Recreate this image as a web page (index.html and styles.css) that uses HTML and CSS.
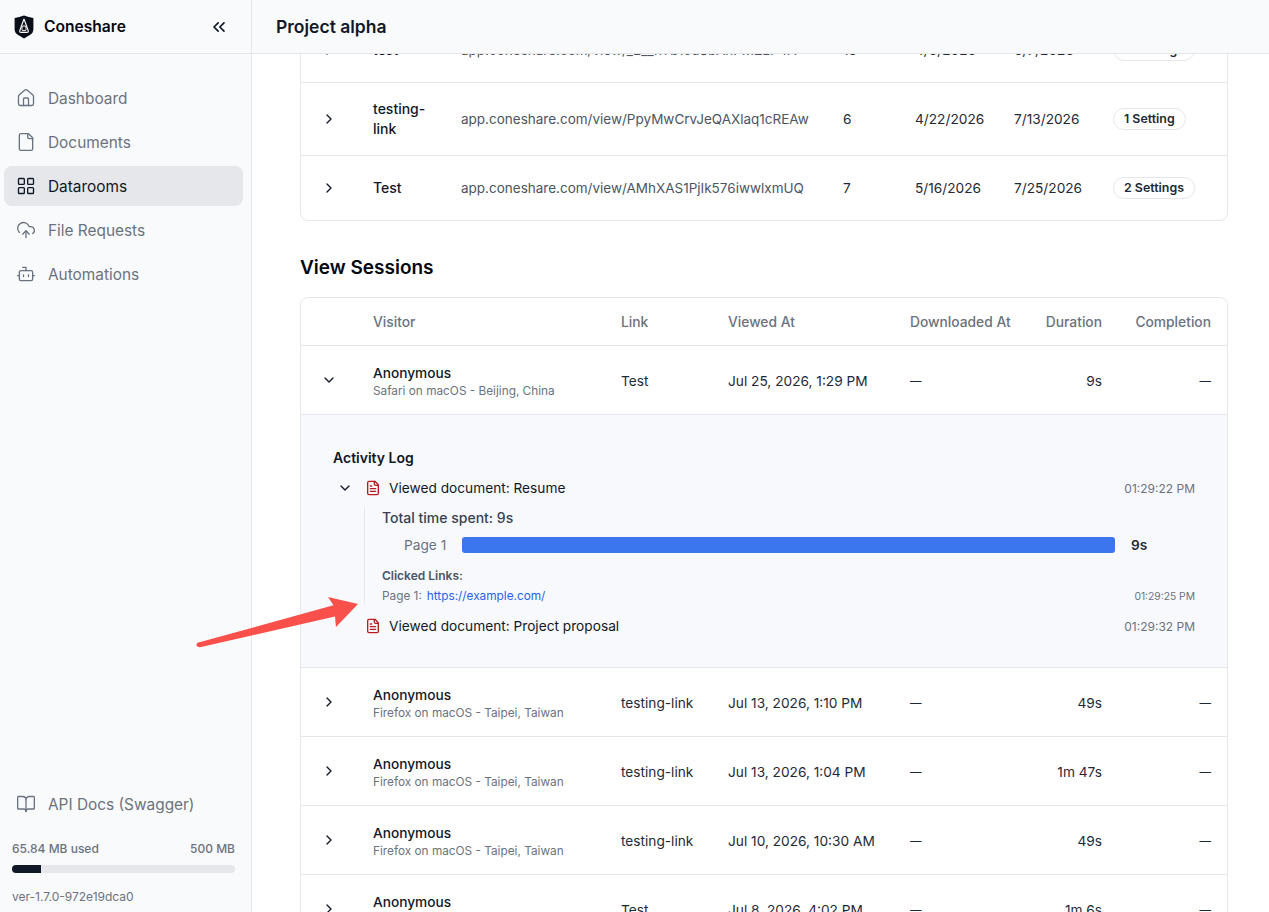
FILE: index.html
```html
<!DOCTYPE html>
<html>
<head>
  <title>Project alpha - Coneshare</title>
  <link rel="stylesheet" href="styles.css">
</head>
<body>
  <div class="app">
    <aside class="sidebar">
      <div class="brand">
        <svg class="logo" viewBox="0 0 20 24" width="20" height="24">
          <path d="M10 .4 Q15 2.2 19.4 3 V14 Q19.4 18.5 15 20.5 L10 23.6 L5 20.5 Q.6 18.5 .6 14 V3 Q5 2.2 10 .4 Z" fill="#0b0f19"/>
          <path d="M10 4 L14.2 15.5 Q14.6 17.4 13 17.4 H7 Q5.4 17.4 5.8 15.5 Z" fill="none" stroke="#fff" stroke-width="1.1" stroke-linejoin="round"/>
          <rect x="8" y="11" width="4" height="4.6" rx="1" fill="none" stroke="#fff" stroke-width="1"/>
        </svg>
        <span class="brand-name">Coneshare</span>
        <svg class="icon collapse" viewBox="0 0 24 24"><path d="m11 17-5-5 5-5"/><path d="m18 17-5-5 5-5"/></svg>
      </div>
      <nav class="nav">
        <a class="nav-item"><svg class="icon" viewBox="0 0 24 24"><path d="M15 21v-8a1 1 0 0 0-1-1h-4a1 1 0 0 0-1 1v8"/><path d="M3 10a2 2 0 0 1 .709-1.528l7-5.999a2 2 0 0 1 2.582 0l7 5.999A2 2 0 0 1 21 10v9a2 2 0 0 1-2 2H5a2 2 0 0 1-2-2z"/></svg>Dashboard</a>
        <a class="nav-item"><svg class="icon" viewBox="0 0 24 24"><path d="M15 2H6a2 2 0 0 0-2 2v16a2 2 0 0 0 2 2h12a2 2 0 0 0 2-2V7Z"/><path d="M14 2v4a2 2 0 0 0 2 2h4"/></svg>Documents</a>
        <a class="nav-item active"><svg class="icon" viewBox="0 0 24 24"><rect width="7" height="7" x="3" y="3" rx="1"/><rect width="7" height="7" x="14" y="3" rx="1"/><rect width="7" height="7" x="14" y="14" rx="1"/><rect width="7" height="7" x="3" y="14" rx="1"/></svg>Datarooms</a>
        <a class="nav-item"><svg class="icon" viewBox="0 0 24 24"><path d="M12 13v8"/><path d="M4 14.899A7 7 0 1 1 15.71 8h1.79a4.5 4.5 0 0 1 2.5 8.242"/><path d="m8 17 4-4 4 4"/></svg>File Requests</a>
        <a class="nav-item"><svg class="icon" viewBox="0 0 24 24"><path d="M12 8V4H8"/><rect width="16" height="12" x="4" y="8" rx="2"/><path d="M2 14h2"/><path d="M20 14h2"/><path d="M15 13v2"/><path d="M9 13v2"/></svg>Automations</a>
      </nav>
      <div class="side-foot">
        <a class="nav-item"><svg class="icon" viewBox="0 0 24 24"><path d="M12 7v14"/><path d="M3 18a1 1 0 0 1-1-1V4a1 1 0 0 1 1-1h5a4 4 0 0 1 4 4 4 4 0 0 1 4-4h5a1 1 0 0 1 1 1v13a1 1 0 0 1-1 1h-6a3 3 0 0 0-3 3 3 3 0 0 0-3-3z"/></svg>API Docs (Swagger)</a>
        <div class="usage">
          <div class="usage-row"><span>65.84 MB used</span><span>500 MB</span></div>
          <div class="usage-track"><div class="usage-fill" style="width:13%"></div></div>
          <div class="version">ver-1.7.0-972e19dca0</div>
        </div>
      </div>
    </aside>

    <div class="main">
      <header class="topbar">Project alpha</header>
      <div class="content">
        <div class="card links-card">
          <table class="links">
            <colgroup><col class="l1"><col class="l2"><col class="l3"><col class="l4"><col class="l5"><col class="l6"><col></colgroup>
            <tr class="row-first">
              <td><svg class="chev" viewBox="0 0 24 24"><path d="m9 18 6-6-6-6"/></svg></td>
              <td class="name">test</td>
              <td class="url">app.coneshare.com/view/_2__hYb1cdSbAhPMZzP4A</td>
              <td>13</td><td>4/3/2026</td><td>6/7/2026</td>
              <td><span class="pill">3 Settings</span></td>
            </tr>
            <tr class="row-tall">
              <td><svg class="chev" viewBox="0 0 24 24"><path d="m9 18 6-6-6-6"/></svg></td>
              <td class="name">testing-link</td>
              <td class="url">app.coneshare.com/view/PpyMwCrvJeQAXlaq1cREAw</td>
              <td>6</td><td>4/22/2026</td><td>7/13/2026</td>
              <td><span class="pill">1 Setting</span></td>
            </tr>
            <tr class="row-last">
              <td><svg class="chev" viewBox="0 0 24 24"><path d="m9 18 6-6-6-6"/></svg></td>
              <td class="name">Test</td>
              <td class="url">app.coneshare.com/view/AMhXAS1PjIk576iwwlxmUQ</td>
              <td>7</td><td>5/16/2026</td><td>7/25/2026</td>
              <td><span class="pill">2 Settings</span></td>
            </tr>
          </table>
        </div>

        <h2 class="section-title">View Sessions</h2>

        <div class="card">
          <table class="sessions">
            <colgroup><col class="s1"><col class="s2"><col class="s3"><col class="s4"><col class="s5"><col class="s6"><col></colgroup>
            <thead>
              <tr>
                <th></th><th>Visitor</th><th>Link</th><th>Viewed At</th><th>Downloaded At</th>
                <th class="right">Duration</th><th class="right">Completion</th>
              </tr>
            </thead>
            <tbody>
              <tr>
                <td><svg class="chev" viewBox="0 0 24 24"><path d="m6 9 6 6 6-6"/></svg></td>
                <td><div class="visitor">Anonymous</div><div class="agent">Safari on macOS - Beijing, China</div></td>
                <td>Test</td><td>Jul 25, 2026, 1:29 PM</td><td class="dash">—</td>
                <td class="right">9s</td><td class="right dash">—</td>
              </tr>
              <tr class="detail-row">
                <td colspan="7">
                  <div class="detail">
                    <h4 class="log-title">Activity Log</h4>
                    <div class="log-entry">
                      <svg class="chev small" viewBox="0 0 24 24"><path d="m6 9 6 6 6-6"/></svg>
                      <svg class="doc" viewBox="0 0 24 24"><path d="M15 2H6a2 2 0 0 0-2 2v16a2 2 0 0 0 2 2h12a2 2 0 0 0 2-2V7Z"/><path d="M14 2v4a2 2 0 0 0 2 2h4"/><path d="M10 9H8"/><path d="M16 13H8"/><path d="M16 17H8"/></svg>
                      <span class="log-text">Viewed document: Resume</span>
                      <span class="log-time">01:29:22 PM</span>
                    </div>
                    <div class="log-body">
                      <div class="total">Total time spent: 9s</div>
                      <div class="page-row">
                        <span class="page-label">Page 1</span>
                        <div class="page-bar"></div>
                        <span class="page-time">9s</span>
                      </div>
                      <div class="clicked">Clicked Links:</div>
                      <div class="clicked-row">
                        <span>Page 1:</span>
                        <a class="link">https://example.com/</a>
                        <span class="clicked-time">01:29:25 PM</span>
                      </div>
                    </div>
                    <div class="log-entry second">
                      <svg class="doc" viewBox="0 0 24 24"><path d="M15 2H6a2 2 0 0 0-2 2v16a2 2 0 0 0 2 2h12a2 2 0 0 0 2-2V7Z"/><path d="M14 2v4a2 2 0 0 0 2 2h4"/><path d="M10 9H8"/><path d="M16 13H8"/><path d="M16 17H8"/></svg>
                      <span class="log-text">Viewed document: Project proposal</span>
                      <span class="log-time">01:29:32 PM</span>
                    </div>
                  </div>
                </td>
              </tr>
              <tr>
                <td><svg class="chev" viewBox="0 0 24 24"><path d="m9 18 6-6-6-6"/></svg></td>
                <td><div class="visitor">Anonymous</div><div class="agent">Firefox on macOS - Taipei, Taiwan</div></td>
                <td>testing-link</td><td>Jul 13, 2026, 1:10 PM</td><td class="dash">—</td>
                <td class="right">49s</td><td class="right dash">—</td>
              </tr>
              <tr>
                <td><svg class="chev" viewBox="0 0 24 24"><path d="m9 18 6-6-6-6"/></svg></td>
                <td><div class="visitor">Anonymous</div><div class="agent">Firefox on macOS - Taipei, Taiwan</div></td>
                <td>testing-link</td><td>Jul 13, 2026, 1:04 PM</td><td class="dash">—</td>
                <td class="right">1m 47s</td><td class="right dash">—</td>
              </tr>
              <tr>
                <td><svg class="chev" viewBox="0 0 24 24"><path d="m9 18 6-6-6-6"/></svg></td>
                <td><div class="visitor">Anonymous</div><div class="agent">Firefox on macOS - Taipei, Taiwan</div></td>
                <td>testing-link</td><td>Jul 10, 2026, 10:30 AM</td><td class="dash">—</td>
                <td class="right">49s</td><td class="right dash">—</td>
              </tr>
              <tr>
                <td><svg class="chev" viewBox="0 0 24 24"><path d="m9 18 6-6-6-6"/></svg></td>
                <td><div class="visitor">Anonymous</div><div class="agent">Firefox on macOS - Taipei, Taiwan</div></td>
                <td>Test</td><td>Jul 8, 2026, 4:02 PM</td><td class="dash">—</td>
                <td class="right">1m 6s</td><td class="right dash">—</td>
              </tr>
            </tbody>
          </table>
        </div>
      </div>
    </div>
  </div>

  <!-- annotation arrow drawn over the screenshot -->
  <svg class="arrow" width="1269" height="912" viewBox="0 0 1269 912">
    <path d="M198.5 642.6 L333.5 605.2 L328 597 L358 604 L336 627 L335 616.5 L200 647.2 Q196 647 196.6 644 Q197 643 198.5 642.6 Z" fill="#f9504b"/>
  </svg>
</body>
</html>
```

FILE: styles.css
```css
* {
  box-sizing: border-box;
}

html, body {
  margin: 0;
  height: 100%;
  overflow: hidden;
}

body {
  font-family: Inter, "Liberation Sans", sans-serif;
  font-size: 13.7px;
  color: #111827;
  background: #fff;
}

.app {
  display: flex;
  height: 912px;
}

.icon {
  width: 20px;
  height: 20px;
  flex: none;
  fill: none;
  stroke: currentColor;
  stroke-width: 2;
  stroke-linecap: round;
  stroke-linejoin: round;
}

/* sidebar */
.sidebar {
  width: 252px;
  flex: none;
  display: flex;
  flex-direction: column;
  background: #f9fafb;
  border-right: 1px solid #e5e7eb;
}

.brand {
  height: 54px;
  display: flex;
  align-items: center;
  padding: 0 22px 0 14px;
  border-bottom: 1px solid #e5e7eb;
}

.logo {
  flex: none;
  margin-right: 10px;
}

.brand-name {
  flex: 1;
  font-size: 15.6px;
  font-weight: 600;
  color: #030712;
}

.collapse {
  color: #111827;
}

.nav {
  display: flex;
  flex-direction: column;
  gap: 4px;
  padding: 24px 8px 0 4px;
}

.nav-item {
  height: 40px;
  display: flex;
  align-items: center;
  gap: 12px;
  padding: 0 12px;
  border-radius: 8px;
  font-size: 15.4px;
  color: #6b7280;
}

.nav-item .icon {
  stroke-width: 1.6;
}

.nav-item.active {
  background: #e5e7eb;
  color: #111827;
}

.side-foot {
  margin-top: auto;
  padding: 0 16px 7px 0;
}

.side-foot .nav-item {
  padding-left: 16px;
}

.usage {
  padding: 0 0 0 12px;
  margin-top: 17px;
  font-size: 12px;
  color: #6b7280;
}

.usage-row {
  display: flex;
  justify-content: space-between;
  font-weight: 500;
  line-height: 16px;
  margin-top: 9px;
}

.usage-track {
  height: 8px;
  margin-top: 8px;
  border-radius: 4px;
  background: #e5e7eb;
  overflow: hidden;
}

.usage-fill {
  height: 100%;
  background: #111827;
}

.version {
  margin-top: 16px;
  line-height: 16px;
}

/* main column */
.main {
  flex: 1;
  min-width: 0;
  display: flex;
  flex-direction: column;
  height: 912px;
  overflow: hidden;
}

.topbar {
  height: 54px;
  flex: none;
  display: flex;
  align-items: center;
  padding: 0 24px;
  font-size: 17.5px;
  font-weight: 600;
  background: #f9fafb;
  border-bottom: 1px solid #e5e7eb;
  position: relative;
  z-index: 1;
}

.content {
  flex: 1;
  min-height: 0;
  overflow: hidden;
  padding: 0 41px 0 48px;
}

.card {
  border: 1px solid #e5e7eb;
  border-radius: 8px;
  overflow: hidden;
  background: #fff;
}

.links-card {
  margin-top: -38px;
}

table {
  width: 100%;
  border-collapse: collapse;
  table-layout: fixed;
}

td, th {
  padding: 0 16px;
  text-align: left;
  font-weight: 400;
  vertical-align: middle;
}

tr + tr td,
tbody tr td {
  border-top: 1px solid #e5e7eb;
}

.right {
  text-align: right;
}

.chev {
  display: block;
  width: 16px;
  height: 16px;
  margin-left: 4px;
  fill: none;
  stroke: #111827;
  stroke-width: 2;
  stroke-linecap: round;
  stroke-linejoin: round;
}

/* links table */
.l1 { width: 56px; }
.l2 { width: 88px; }
.l3 { width: 382px; }
.l4 { width: 72px; }
.l5 { width: 99px; }
.l6 { width: 99px; }

.links tr {
  height: 65px;
}

.links tr.row-tall {
  height: 73px;
}

.links tr.row-last {
  height: 64px;
}

.links td {
  line-height: 20px;
  color: #1f2937;
}

.links td.name {
  font-size: 14px;
  font-weight: 500;
  color: #111827;
}

.links td.url {
  font-size: 13.5px;
  color: #4b5563;
  white-space: nowrap;
}

.pill {
  display: inline-block;
  padding: 0 10px;
  line-height: 20px;
  border: 1px solid #e5e7eb;
  border-radius: 11px;
  font-size: 12.4px;
  font-weight: 600;
  white-space: nowrap;
}

.section-title {
  margin: 33px 0 15px;
  font-size: 19px;
  line-height: 28px;
  font-weight: 600;
  color: #030712;
}

/* sessions table */
.s1 { width: 56px; }
.s2 { width: 248px; }
.s3 { width: 107px; }
.s4 { width: 182px; }
.s5 { width: 133px; }
.s6 { width: 91px; }

.sessions th {
  height: 48px;
  padding-top: 2px;
  font-size: 13.8px;
  font-weight: 500;
  color: #6b7280;
  white-space: nowrap;
}

.sessions tbody tr {
  height: 69px;
}

.sessions tbody td {
  color: #1f2937;
  white-space: nowrap;
}

.sessions tbody td + td {
  padding-top: 2px;
}

.sessions tbody td.dash {
  font-size: 11.5px;
}

.visitor {
  font-weight: 500;
  line-height: 20px;
  color: #111827;
}

.agent {
  font-size: 11.8px;
  line-height: 16px;
  color: #6b7280;
}

/* expanded row */
.sessions tbody tr.detail-row td {
  padding: 0;
  background: #f8f9fc;
}

.detail {
  height: 252px;
  padding: 33px 32px 0;
}

.log-title {
  margin: 0;
  font-size: 14px;
  line-height: 20px;
  font-weight: 600;
  color: #111827;
}

.log-entry {
  display: flex;
  align-items: center;
  height: 20px;
  margin-top: 10px;
  padding-left: 4px;
}

.log-entry .chev {
  flex: none;
  margin: 0;
}

.log-entry.second {
  margin-top: 13px;
  padding-left: 32px;
}

.doc {
  flex: none;
  width: 16px;
  height: 16px;
  margin-left: 12px;
  fill: none;
  stroke: #b91c1c;
  stroke-width: 2;
  stroke-linecap: round;
  stroke-linejoin: round;
}

.second .doc {
  margin-left: 0;
}

.log-text {
  flex: 1;
  margin-left: 8px;
  color: #111827;
}

.log-time {
  font-size: 12px;
  color: #6b7280;
}

.log-body {
  margin: 9px 0 0 31px;
  padding: 1px 0 0 17px;
  height: 96px;
  border-left: 1px solid #e5e7eb;
}

.total {
  font-size: 14px;
  line-height: 20px;
  font-weight: 500;
  color: #374151;
}

.page-row {
  display: flex;
  align-items: center;
  height: 16px;
  margin-top: 9px;
  padding-left: 22px;
}

.page-label {
  width: 58px;
  color: #6b7280;
}

.page-bar {
  flex: none;
  width: 653px;
  height: 16px;
  border-radius: 3px;
  background: #3b76ef;
}

.page-time {
  margin-left: 16px;
  font-weight: 600;
  color: #1f2937;
}

.clicked {
  margin-top: 15px;
  font-size: 12px;
  line-height: 16px;
  font-weight: 600;
  color: #4b5563;
}

.clicked-row {
  display: flex;
  gap: 5px;
  margin-top: 4px;
  font-size: 11.8px;
  line-height: 16px;
  color: #6b7280;
}

.link {
  flex: 1;
  color: #2563eb;
}

.clicked-time {
  font-size: 10.3px;
}

.arrow {
  position: absolute;
  left: 0;
  top: 0;
  pointer-events: none;
  z-index: 2;
}
```
